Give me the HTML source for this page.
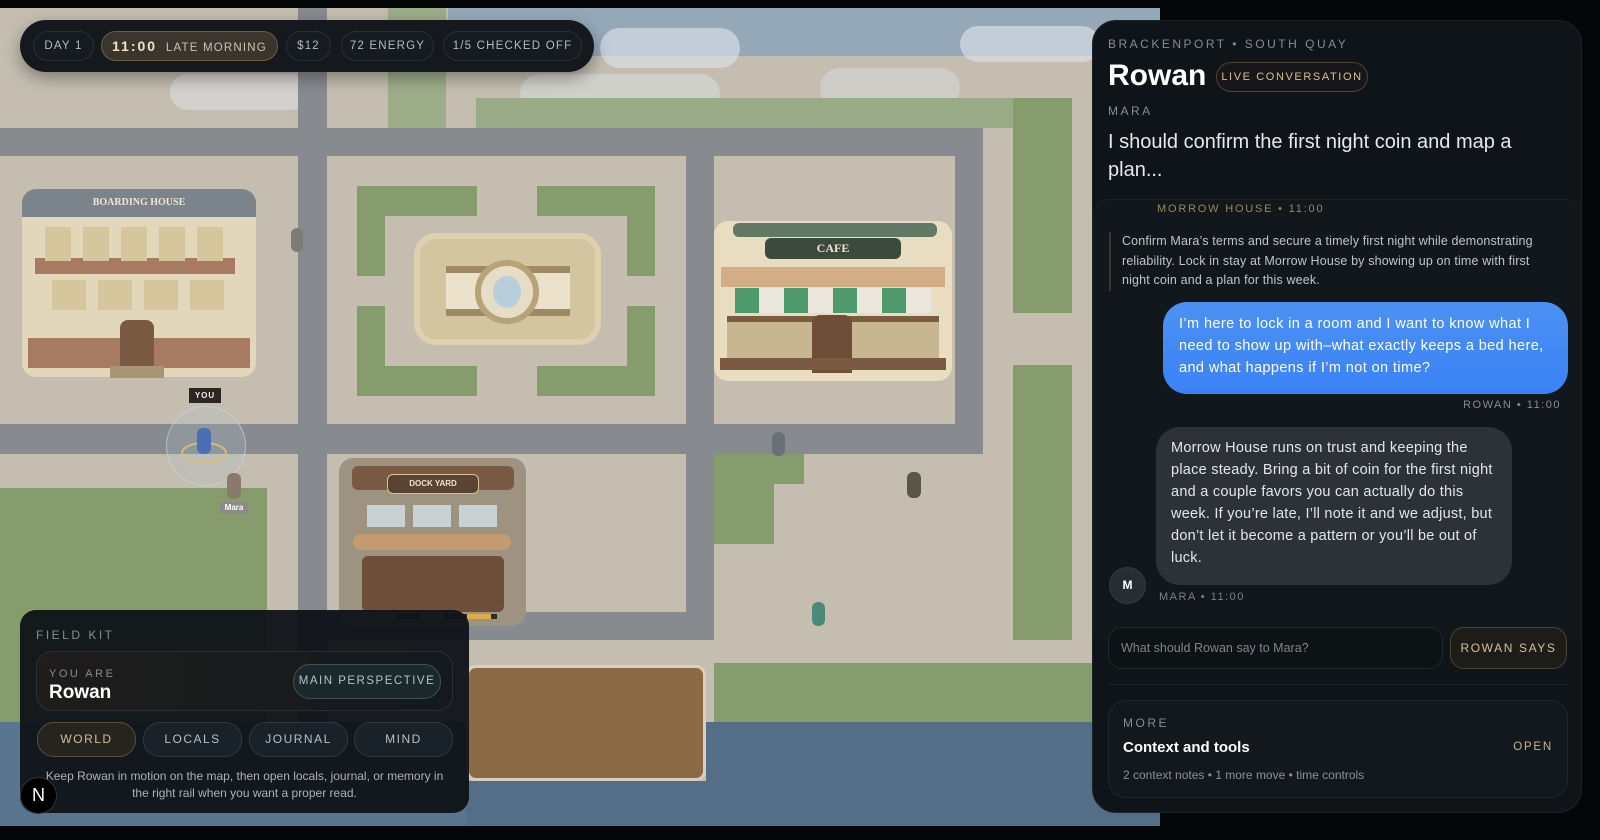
<!DOCTYPE html>
<html><head><meta charset="utf-8"><style>
*{box-sizing:border-box;margin:0;padding:0}
body{width:1600px;height:840px;background:#050607;overflow:hidden;position:relative;font-family:"Liberation Sans",sans-serif}
.a{position:absolute}
.map{left:0;top:8px;width:1160px;height:818px;background:#c4bdb0;overflow:hidden}
.road{position:absolute;background:#878a8e}
.gr{position:absolute;background:#869c6c}
.pill{position:absolute;top:11px;height:30px;border:1px solid #2b3035;border-radius:15px;background:#161b20;color:#b7bbbf;font-size:11.5px;letter-spacing:1.2px;line-height:28px;text-align:center}
.lab{font-size:12px;letter-spacing:2.5px;color:#868c94}
.tab{position:absolute;top:112px;height:35px;width:99px;border:1px solid #2f3a42;border-radius:17px;background:#1a2229;color:#b8c0c6;font-size:12px;letter-spacing:1.5px;line-height:33px;text-align:center}
</style></head><body>
<div class="a map">
  <div class="a" style="left:448px;top:0;width:712px;height:48px;background:#94a8b8"></div>
  <div class="a" style="left:600px;top:20px;width:140px;height:40px;border-radius:20px;background:rgba(225,230,235,.6)"></div>
  <div class="a" style="left:960px;top:18px;width:140px;height:36px;border-radius:18px;background:rgba(225,230,235,.6)"></div>
  <div class="a" style="left:170px;top:66px;width:140px;height:36px;border-radius:18px;background:rgba(225,230,235,.5)"></div>
  <div class="a" style="left:520px;top:66px;width:200px;height:40px;border-radius:20px;background:rgba(225,230,235,.45)"></div>
  <div class="a" style="left:820px;top:60px;width:140px;height:40px;border-radius:20px;background:rgba(225,230,235,.4)"></div>
  <div class="gr" style="left:388px;top:0;width:58px;height:120px;background:#9cad88"></div>
  <div class="gr" style="left:476px;top:90px;width:596px;height:30px;background:#98ab86"></div>
  <div class="road" style="left:0;top:120px;width:983px;height:28px"></div>
  <div class="road" style="left:0;top:416px;width:983px;height:30px"></div>
  <div class="road" style="left:298px;top:0;width:29px;height:818px"></div>
  <div class="road" style="left:686px;top:148px;width:28px;height:484px"></div>
  <div class="road" style="left:955px;top:120px;width:28px;height:326px"></div>
  <div class="road" style="left:327px;top:604px;width:387px;height:28px"></div>
  <div class="gr" style="left:1013px;top:90px;width:59px;height:215px"></div>
  <div class="gr" style="left:1013px;top:357px;width:59px;height:275px"></div>
  <div class="gr" style="left:714px;top:446px;width:90px;height:30px"></div>
  <div class="gr" style="left:714px;top:446px;width:60px;height:90px"></div>
  <div class="gr" style="left:714px;top:655px;width:446px;height:70px"></div>
  <div class="gr" style="left:0;top:480px;width:267px;height:250px"></div>
  <div class="gr" style="left:357px;top:178px;width:120px;height:30px"></div>
  <div class="gr" style="left:357px;top:178px;width:28px;height:90px"></div>
  <div class="gr" style="left:537px;top:178px;width:118px;height:30px"></div>
  <div class="gr" style="left:627px;top:178px;width:28px;height:90px"></div>
  <div class="gr" style="left:357px;top:298px;width:28px;height:90px"></div>
  <div class="gr" style="left:357px;top:358px;width:120px;height:30px"></div>
  <div class="gr" style="left:627px;top:298px;width:28px;height:90px"></div>
  <div class="gr" style="left:537px;top:358px;width:118px;height:30px"></div>
  <div class="a" style="left:414px;top:225px;width:187px;height:112px;border-radius:22px;background:#d3c5a0;border:6px solid #ddd1b0"></div>
  <div class="a" style="left:446px;top:258px;width:124px;height:50px;background:#ece2cc;border-top:7px solid #9d8a63;border-bottom:7px solid #9d8a63"></div>
  <div class="a" style="left:475px;top:252px;width:64px;height:64px;border-radius:50%;border:6px solid #b6a37a;background:#e7ddc7"></div>
  <div class="a" style="left:493px;top:268px;width:28px;height:32px;border-radius:50%;background:#b9cedd"></div>
  <div class="a" style="left:22px;top:181px;width:234px;height:188px;border-radius:14px;background:#e2d6bb"></div>
  <div class="a" style="left:22px;top:181px;width:234px;height:28px;border-radius:14px 14px 0 0;background:#7b838b;color:#efe6d4;font:bold 10px 'Liberation Serif',serif;text-align:center;line-height:28px">BOARDING HOUSE</div>
  <div class="a" style="left:35px;top:250px;width:200px;height:16px;background:#a97a62"></div>
  <div class="a" style="left:45px;top:219px;width:188px;height:34px;background:repeating-linear-gradient(90deg,#d6c69e 0 26px,transparent 26px 38px)"></div>
  <div class="a" style="left:52px;top:272px;width:180px;height:30px;background:repeating-linear-gradient(90deg,#d6c69e 0 34px,transparent 34px 46px)"></div>
  <div class="a" style="left:28px;top:330px;width:222px;height:30px;background:#a97a62"></div>
  <div class="a" style="left:120px;top:312px;width:34px;height:50px;background:#7a5a43;border-radius:8px 8px 0 0"></div>
  <div class="a" style="left:110px;top:358px;width:54px;height:12px;background:#a89572"></div>
  <div class="a" style="left:714px;top:213px;width:238px;height:160px;border-radius:14px;background:#e8dcc1"></div>
  <div class="a" style="left:733px;top:215px;width:204px;height:14px;background:#627a65;border-radius:6px"></div>
  <div class="a" style="left:765px;top:230px;width:136px;height:21px;border-radius:6px;background:#3b4a3d;color:#ece4d0;font:bold 12px 'Liberation Serif',serif;text-align:center;line-height:21px">CAFE</div>
  <div class="a" style="left:721px;top:259px;width:224px;height:20px;background:#d2ad85"></div>
  <div class="a" style="left:735px;top:280px;width:196px;height:25px;background:repeating-linear-gradient(90deg,#4f9a6d 0 24px,#ece7dc 24px 49px)"></div>
  <div class="a" style="left:727px;top:308px;width:212px;height:42px;background:#c7b791;border-top:6px solid #7b5b43"></div>
  <div class="a" style="left:812px;top:307px;width:40px;height:58px;background:#6e4e38;border-radius:8px 8px 0 0"></div>
  <div class="a" style="left:720px;top:350px;width:226px;height:12px;background:#7a5a43"></div>
  <div class="a" style="left:339px;top:450px;width:187px;height:168px;border-radius:14px;background:#9e9380"></div>
  <div class="a" style="left:352px;top:458px;width:162px;height:24px;background:#7b5a43;border-radius:6px"></div>
  <div class="a" style="left:387px;top:466px;width:92px;height:20px;border-radius:6px;background:#5a4332;border:1px solid #d9c28e;color:#efe4ce;font:bold 8px 'Liberation Sans',sans-serif;text-align:center;line-height:18px">DOCK YARD</div>
  <div class="a" style="left:367px;top:497px;width:130px;height:22px;background:repeating-linear-gradient(90deg,#c9d2d3 0 38px,transparent 38px 46px)"></div>
  <div class="a" style="left:353px;top:526px;width:158px;height:16px;border-radius:8px;background:#c49b70"></div>
  <div class="a" style="left:362px;top:548px;width:142px;height:56px;border-radius:6px;background:#6e4e38"></div>
  <div class="a" style="left:373px;top:606px;width:124px;height:5px;background:repeating-linear-gradient(90deg,#e0a94a 0 24px,#2c2c2c 24px 47px)"></div>
  <div class="a" style="left:466px;top:657px;width:240px;height:116px;border-radius:10px;background:#8d6a46;border:3px solid #d8cfbd"></div>
  <div class="a" style="left:0;top:714px;width:466px;height:104px;background:#5a7590"></div>
  <div class="a" style="left:706px;top:714px;width:454px;height:104px;background:#546e87"></div>
  <div class="a" style="left:466px;top:773px;width:240px;height:45px;background:#546e87"></div>
  <div class="a" style="left:166px;top:398px;width:80px;height:80px;border-radius:50%;border:1px solid rgba(200,220,225,.6);background:rgba(170,190,200,.25)"></div>
  <div class="a" style="left:181px;top:434px;width:46px;height:22px;border-radius:50%;border:2px solid #d9be7a"></div>
  <div class="a" style="left:197px;top:420px;width:14px;height:26px;border-radius:6px;background:#4a6fb5"></div>
  <div class="a" style="left:189px;top:380px;width:32px;height:15px;background:#2b2620;color:#eee;font:bold 8px sans-serif;letter-spacing:1px;text-align:center;line-height:15px">YOU</div>
  <div class="a" style="left:227px;top:465px;width:14px;height:26px;border-radius:6px;background:#8a7a6c"></div>
  <div class="a" style="left:220px;top:494px;width:28px;height:12px;background:#8e8a85;color:#fff;font:bold 8px sans-serif;text-align:center;line-height:12px">Mara</div>
  <div class="a" style="left:291px;top:220px;width:12px;height:24px;border-radius:6px;background:#7d7a78"></div>
  <div class="a" style="left:772px;top:424px;width:13px;height:24px;border-radius:6px;background:#6a7078"></div>
  <div class="a" style="left:907px;top:464px;width:14px;height:26px;border-radius:6px;background:#5a5546"></div>
  <div class="a" style="left:812px;top:594px;width:13px;height:24px;border-radius:6px;background:#4b8a7a"></div>
</div>

<div class="a" style="left:20px;top:20px;width:574px;height:52px;border-radius:26px;background:#15191d;box-shadow:0 6px 16px rgba(0,0,0,.35)">
  <div class="pill" style="left:13px;width:61px">DAY 1</div>
  <div class="pill" style="left:81px;width:177px;background:#3a352d;border-color:#6c5e43;color:#cdc3ae"><b style="color:#f2e4c2;font-size:14px;letter-spacing:2px">11:00</b>&nbsp; LATE MORNING</div>
  <div class="pill" style="left:266px;width:45px">$12</div>
  <div class="pill" style="left:321px;width:93px">72 ENERGY</div>
  <div class="pill" style="left:423px;width:139px">1/5 CHECKED OFF</div>
</div>

<div class="a" style="left:1092px;top:20px;width:490px;height:793px;border-radius:24px;background:#0f1418;border:1px solid #1d2328;overflow:hidden">
  <div class="a" style="left:0;top:178px;width:490px;height:440px;border-radius:16px 16px 0 0;background:#11171b;border-top:1px solid #1c2227"></div>
  <div class="a lab" style="left:15px;top:16px">BRACKENPORT • SOUTH QUAY</div>
  <div class="a" style="left:15px;top:38px;color:#fff;font-weight:bold;font-size:30px">Rowan</div>
  <div class="a" style="left:123px;top:41px;width:152px;height:30px;border-radius:15px;border:1px solid #4e4430;background:#17171a;color:#d6c18f;font-size:11px;letter-spacing:1.6px;line-height:28px;text-align:center">LIVE CONVERSATION</div>
  <div class="a lab" style="left:15px;top:83px">MARA</div>
  <div class="a" style="left:15px;top:107px;width:440px;color:#e6e8eb;font-size:20px;line-height:28px">I should confirm the first night coin and map a plan...</div>
  <div class="a" style="left:64px;top:182px;color:#9b875a;font-size:11px;letter-spacing:1.8px">MORROW HOUSE • 11:00</div>
  <div class="a" style="left:16px;top:211px;width:445px;border-left:2px solid #3a3732;padding-left:11px;color:#c1c5c9;font-size:12.5px;line-height:19.5px;letter-spacing:0.15px">Confirm Mara’s terms and secure a timely first night while demonstrating reliability. Lock in stay at Morrow House by showing up on time with first night coin and a plan for this week.</div>
  <div class="a" style="left:70px;top:281px;width:405px;height:92px;border-radius:24px;background:linear-gradient(#4b91f3,#3b82f6);color:#fff;font-size:14.5px;line-height:22px;letter-spacing:0.4px;padding:11px 15px 0 16px">I’m here to lock in a room and I want to know what I need to show up with–what exactly keeps a bed here, and what happens if I’m not on time?</div>
  <div class="a" style="right:20px;top:378px;color:#868c94;font-size:11px;letter-spacing:1.5px">ROWAN • 11:00</div>
  <div class="a" style="left:63px;top:406px;width:356px;height:158px;border-radius:24px;background:#2c3238;color:#e4e6e9;font-size:14.5px;line-height:22px;letter-spacing:0.25px;padding:10px 15px 0 15px">Morrow House runs on trust and keeping the place steady. Bring a bit of coin for the first night and a couple favors you can actually do this week. If you’re late, I’ll note it and we adjust, but don’t let it become a pattern or you’ll be out of luck.</div>
  <div class="a" style="left:16px;top:546px;width:37px;height:37px;border-radius:50%;background:#262d33;border:1px solid #353c42;color:#fff;font-weight:bold;font-size:12px;text-align:center;line-height:35px">M</div>
  <div class="a" style="left:66px;top:570px;color:#7b8189;font-size:11px;letter-spacing:1.5px">MARA • 11:00</div>
  <div class="a" style="left:15px;top:606px;width:335px;height:42px;border-radius:14px;border:1px solid #22292e;background:#0d1215;color:#7e848b;font-size:12.5px;line-height:40px;padding-left:12px">What should Rowan say to Mara?</div>
  <div class="a" style="left:357px;top:606px;width:117px;height:42px;border-radius:14px;border:1px solid #4c4330;background:#1d1c18;color:#d4c197;font-size:12px;letter-spacing:1.6px;line-height:40px;text-align:center">ROWAN SAYS</div>
  <div class="a" style="left:15px;top:663px;width:460px;height:1px;background:#1d2328"></div>
  <div class="a" style="left:15px;top:679px;width:460px;height:98px;border-radius:18px;border:1px solid #21282d;background:#12181c">
    <div class="a lab" style="left:14px;top:15px">MORE</div>
    <div class="a" style="left:14px;top:38px;color:#fff;font-weight:bold;font-size:15px">Context and tools</div>
    <div class="a" style="right:14px;top:40px;color:#c7b48a;font-size:11.5px;letter-spacing:1.8px">OPEN</div>
    <div class="a" style="left:14px;top:67px;color:#8c9198;font-size:12px">2 context notes • 1 more move • time controls</div>
  </div>
</div>

<div class="a" style="left:20px;top:610px;width:449px;height:203px;border-radius:16px;background:rgba(16,20,25,.96)">
  <div class="a lab" style="left:16px;top:18px">FIELD KIT</div>
  <div class="a" style="left:16px;top:41px;width:417px;height:60px;border-radius:16px;border:1px solid #2c3034;background:linear-gradient(90deg,#1e1d1b,#14191d)">
    <div class="a lab" style="left:12px;top:16px;font-size:11px">YOU ARE</div>
    <div class="a" style="left:12px;top:30px;color:#fff;font-weight:bold;font-size:19px">Rowan</div>
    <div class="a" style="left:256px;top:12px;width:148px;height:35px;border-radius:17px;border:1px solid #3c5356;background:#1b292d;color:#b6c2c4;font-size:11.5px;letter-spacing:1.5px;line-height:33px;text-align:center">MAIN PERSPECTIVE</div>
  </div>
  <div class="tab" style="left:17px;background:#25241f;border-color:#5b5038;color:#d2be92">WORLD</div>
  <div class="tab" style="left:123px">LOCALS</div>
  <div class="tab" style="left:229px">JOURNAL</div>
  <div class="tab" style="left:334px">MIND</div>
  <div class="a" style="left:16px;top:158px;width:417px;color:#aeb2b6;font-size:12px;line-height:17px;text-align:center">Keep Rowan in motion on the map, then open locals, journal, or memory in the right rail when you want a proper read.</div>
</div>
<div class="a" style="left:20px;top:777px;width:37px;height:37px;border-radius:50%;background:#000;border:1px solid #333;color:#fff;font-size:18px;text-align:center;line-height:35px">N</div>
</body></html>
